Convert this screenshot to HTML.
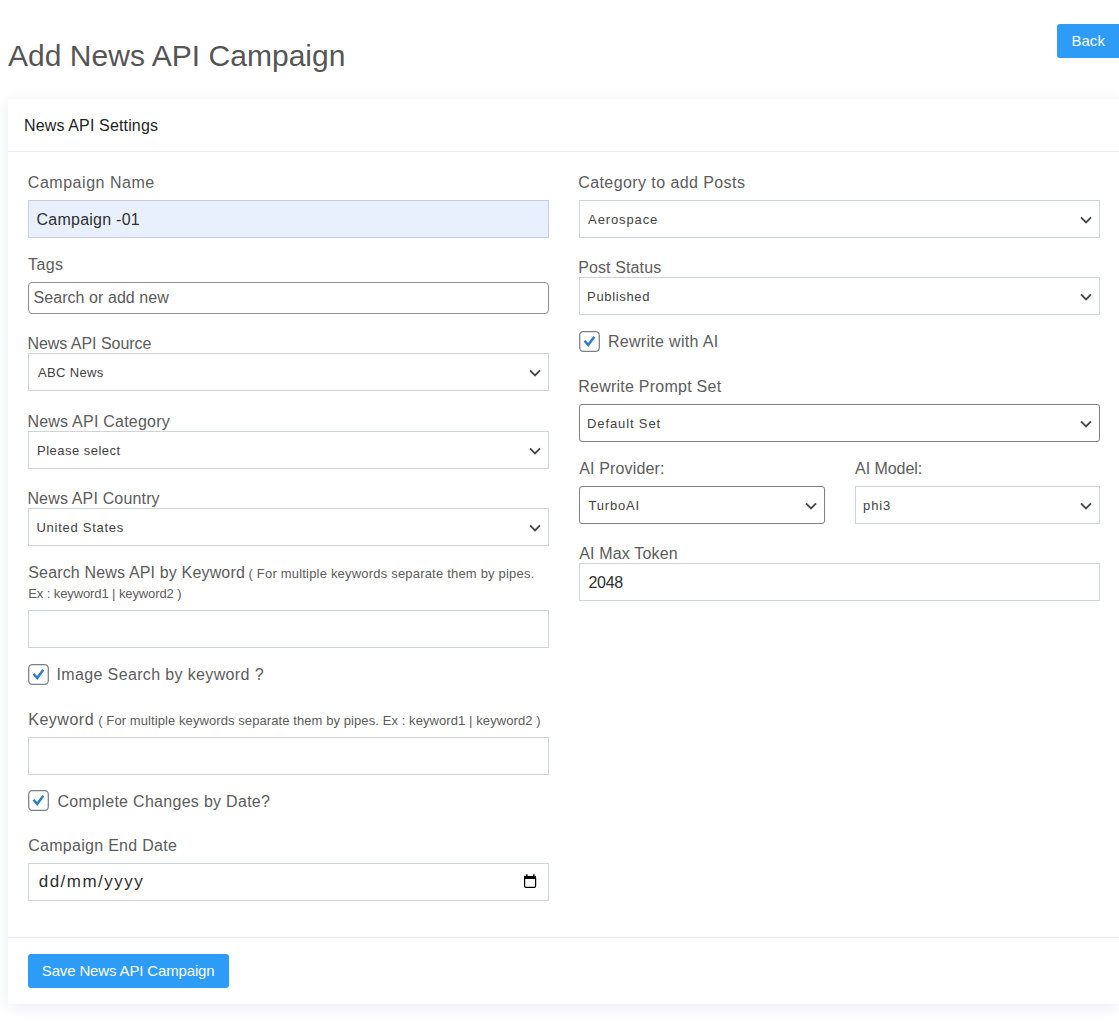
<!DOCTYPE html>
<html><head><meta charset="utf-8">
<style>
html,body{margin:0;padding:0;background:#fff;width:1119px;height:1035px;overflow:hidden;}
body{font-family:"Liberation Sans",sans-serif;position:relative;}
.a{position:absolute;white-space:nowrap;line-height:1;}
.btn{position:absolute;background:#2c9cf6;border-radius:3px;}
.card{position:absolute;left:8px;top:99px;width:1112px;height:905px;background:#fff;box-shadow:0 3px 15px rgba(25,55,130,0.09);}
.hline{position:absolute;left:8px;width:1112px;height:1px;background:#e8ecf0;}
.inp{position:absolute;box-sizing:border-box;border:1px solid #cfd4da;background:#fff;}
svg.ic{position:absolute;overflow:visible;}
</style></head><body>
<div class="btn" style="left:1057px;top:24px;width:64px;height:34px;"></div>
<div class="card"></div>
<div class="hline" style="top:151px;"></div>
<div class="hline" style="top:937px;"></div>
<div class="btn" style="left:28px;top:954px;width:201px;height:34px;"></div>

<div class="inp" style="left:28px;top:200px;width:521px;height:38px;background:#e8f0fe;border-color:#c9ced6;"></div>
<div class="inp" style="left:28px;top:282px;width:521px;height:32px;border-color:#8f8f8f;border-radius:4px;"></div>
<div class="inp" style="left:28px;top:353px;width:521px;height:38px;"></div>
<svg class="ic" style="left:0;top:0" width="1" height="1"><polyline points="530,370.4 535,375.4 540,370.4" fill="none" stroke="#474747" stroke-width="1.9"/></svg>
<div class="inp" style="left:28px;top:431px;width:521px;height:38px;"></div>
<svg class="ic" style="left:0;top:0" width="1" height="1"><polyline points="530,448.4 535,453.4 540,448.4" fill="none" stroke="#474747" stroke-width="1.9"/></svg>
<div class="inp" style="left:28px;top:508px;width:521px;height:38px;"></div>
<svg class="ic" style="left:0;top:0" width="1" height="1"><polyline points="530,525.4 535,530.4 540,525.4" fill="none" stroke="#474747" stroke-width="1.9"/></svg>
<div class="inp" style="left:28px;top:610px;width:521px;height:38px;"></div>
<div class="inp" style="left:28px;top:737px;width:521px;height:38px;"></div>
<div class="inp" style="left:28px;top:863px;width:521px;height:38px;"></div>
<svg class="ic" style="left:0;top:0" width="1" height="1"><rect x="524.6" y="876.6" width="11" height="10.8" rx="1.3" fill="none" stroke="#000" stroke-width="1.2"/><rect x="524" y="876" width="12" height="3" fill="#000"/><rect x="526" y="874.3" width="1.6" height="2" fill="#000"/><rect x="533" y="874.3" width="1.6" height="2" fill="#000"/></svg>
<div class="inp" style="left:579px;top:200px;width:521px;height:38px;"></div>
<svg class="ic" style="left:0;top:0" width="1" height="1"><polyline points="1081,217.4 1086,222.4 1091,217.4" fill="none" stroke="#474747" stroke-width="1.9"/></svg>
<div class="inp" style="left:579px;top:277px;width:521px;height:38px;"></div>
<svg class="ic" style="left:0;top:0" width="1" height="1"><polyline points="1081,294.4 1086,299.4 1091,294.4" fill="none" stroke="#474747" stroke-width="1.9"/></svg>
<div class="inp" style="left:579px;top:404px;width:521px;height:38px;border-color:#7d8088;border-radius:3px;"></div>
<svg class="ic" style="left:0;top:0" width="1" height="1"><polyline points="1081,421.4 1086,426.4 1091,421.4" fill="none" stroke="#474747" stroke-width="1.9"/></svg>
<div class="inp" style="left:579px;top:486px;width:246px;height:38px;border-color:#7d8088;border-radius:3px;"></div>
<svg class="ic" style="left:0;top:0" width="1" height="1"><polyline points="806,503.4 811,508.4 816,503.4" fill="none" stroke="#474747" stroke-width="1.9"/></svg>
<div class="inp" style="left:855px;top:486px;width:245px;height:38px;"></div>
<svg class="ic" style="left:0;top:0" width="1" height="1"><polyline points="1081,503.4 1086,508.4 1091,503.4" fill="none" stroke="#474747" stroke-width="1.9"/></svg>
<div class="inp" style="left:579px;top:563px;width:521px;height:38px;"></div>
<svg class="ic" style="left:0;top:0" width="1" height="1"><rect x="28.7" y="664.7" width="19.6" height="19.6" rx="3.6" fill="#fff" stroke="#7c7f86" stroke-width="1.25"/><polyline points="33.5,673.8 37.2,678.0 43.3,669.8" fill="none" stroke="#2b7bcb" stroke-width="2.4"/></svg>
<svg class="ic" style="left:0;top:0" width="1" height="1"><rect x="28.7" y="790.7" width="19.6" height="19.6" rx="3.6" fill="#fff" stroke="#7c7f86" stroke-width="1.25"/><polyline points="33.5,799.8 37.2,804.0 43.3,795.8" fill="none" stroke="#2b7bcb" stroke-width="2.4"/></svg>
<svg class="ic" style="left:0;top:0" width="1" height="1"><rect x="579.7" y="331.7" width="19.6" height="19.6" rx="3.6" fill="#fff" stroke="#7c7f86" stroke-width="1.25"/><polyline points="584.5,340.8 588.2,345.0 594.3,336.8" fill="none" stroke="#2b7bcb" stroke-width="2.4"/></svg>
<div class="a" id="title" style="left:8.00px;top:41.30px;font-size:30px;color:#555;letter-spacing:0.030px;">Add News API Campaign</div>
<div class="a" id="back" style="left:1071.40px;top:33.40px;font-size:15px;color:#fff;letter-spacing:0.067px;">Back</div>
<div class="a" id="hdr" style="left:24.00px;top:117.70px;font-size:16px;color:#1f1f1f;letter-spacing:0.144px;">News API Settings</div>
<div class="a" id="l1" style="left:27.80px;top:174.60px;font-size:16px;color:#5c5c5c;letter-spacing:0.533px;">Campaign Name</div>
<div class="a" id="v1" style="left:36.50px;top:211.90px;font-size:16px;color:#303030;letter-spacing:0.245px;">Campaign -01</div>
<div class="a" id="l2" style="left:28.10px;top:257.00px;font-size:16px;color:#5c5c5c;letter-spacing:0.367px;">Tags</div>
<div class="a" id="v2" style="left:33.50px;top:289.90px;font-size:16px;color:#5b5b5b;letter-spacing:0.062px;">Search or add new</div>
<div class="a" id="l3" style="left:27.40px;top:336.00px;font-size:16px;color:#5c5c5c;letter-spacing:-0.029px;">News API Source</div>
<div class="a" id="v3" style="left:38.10px;top:366.00px;font-size:13px;color:#424242;letter-spacing:0.314px;">ABC News</div>
<div class="a" id="l4" style="left:27.40px;top:413.70px;font-size:16px;color:#5c5c5c;letter-spacing:0.231px;">News API Category</div>
<div class="a" id="v4" style="left:37.10px;top:443.90px;font-size:13px;color:#424242;letter-spacing:0.467px;">Please select</div>
<div class="a" id="l5" style="left:27.40px;top:491.25px;font-size:16px;color:#5c5c5c;letter-spacing:0.160px;">News API Country</div>
<div class="a" id="v5" style="left:36.50px;top:521.00px;font-size:13px;color:#424242;letter-spacing:0.725px;">United States</div>
<div class="a" id="l6" style="left:28.25px;top:565.00px;font-size:16px;color:#5c5c5c;letter-spacing:0.160px;">Search News API by Keyword</div>
<div class="a" id="s6" style="left:248.50px;top:567.00px;font-size:13px;color:#5c5c5c;letter-spacing:0.196px;">( For multiple keywords separate them by pipes.</div>
<div class="a" id="s6b" style="left:28.25px;top:587.00px;font-size:13px;color:#5c5c5c;letter-spacing:-0.100px;">Ex : keyword1 | keyword2 )</div>
<div class="a" id="c1" style="left:56.50px;top:667.00px;font-size:16px;color:#5c5c5c;letter-spacing:0.363px;">Image Search by keyword ?</div>
<div class="a" id="l7" style="left:28.25px;top:711.50px;font-size:16px;color:#5c5c5c;letter-spacing:0.517px;">Keyword</div>
<div class="a" id="s7" style="left:98.25px;top:714.00px;font-size:13px;color:#5c5c5c;letter-spacing:0.085px;">( For multiple keywords separate them by pipes. Ex : keyword1 | keyword2 )</div>
<div class="a" id="c2" style="left:57.50px;top:794.25px;font-size:16px;color:#5c5c5c;letter-spacing:0.292px;">Complete Changes by Date?</div>
<div class="a" id="l8" style="left:28.25px;top:837.75px;font-size:16px;color:#5c5c5c;letter-spacing:0.281px;">Campaign End Date</div>
<div class="a" id="v8" style="left:38.75px;top:872.60px;font-size:17px;color:#303030;letter-spacing:1.478px;">dd/mm/yyyy</div>
<div class="a" id="save" style="left:41.80px;top:963.40px;font-size:15px;color:#fff;letter-spacing:-0.148px;">Save News API Campaign</div>
<div class="a" id="r1" style="left:578.20px;top:175.00px;font-size:16px;color:#5c5c5c;letter-spacing:0.420px;">Category to add Posts</div>
<div class="a" id="rv1" style="left:588.10px;top:212.60px;font-size:13px;color:#424242;letter-spacing:0.875px;">Aerospace</div>
<div class="a" id="r2" style="left:578.20px;top:259.60px;font-size:16px;color:#5c5c5c;letter-spacing:0.120px;">Post Status</div>
<div class="a" id="rv2" style="left:587.10px;top:290.10px;font-size:13px;color:#424242;letter-spacing:0.662px;">Published</div>
<div class="a" id="rc" style="left:607.90px;top:333.70px;font-size:16px;color:#5c5c5c;letter-spacing:0.314px;">Rewrite with AI</div>
<div class="a" id="r3" style="left:578.20px;top:378.60px;font-size:16px;color:#5c5c5c;letter-spacing:0.247px;">Rewrite Prompt Set</div>
<div class="a" id="rv3" style="left:587.10px;top:417.40px;font-size:13px;color:#424242;letter-spacing:0.870px;">Default Set</div>
<div class="a" id="r4" style="left:579.20px;top:460.60px;font-size:16px;color:#5c5c5c;letter-spacing:0.155px;">AI Provider:</div>
<div class="a" id="rv4" style="left:588.40px;top:499.20px;font-size:13px;color:#424242;letter-spacing:0.833px;">TurboAI</div>
<div class="a" id="r5" style="left:855.00px;top:460.80px;font-size:16px;color:#5c5c5c;letter-spacing:-0.037px;">AI Model:</div>
<div class="a" id="rv5" style="left:863.10px;top:499.00px;font-size:13px;color:#424242;letter-spacing:0.867px;">phi3</div>
<div class="a" id="r6" style="left:579.20px;top:545.50px;font-size:16px;color:#5c5c5c;letter-spacing:0.173px;">AI Max Token</div>
<div class="a" id="rv6" style="left:588.40px;top:575.00px;font-size:16px;color:#303030;letter-spacing:-0.267px;">2048</div>
</body></html>
